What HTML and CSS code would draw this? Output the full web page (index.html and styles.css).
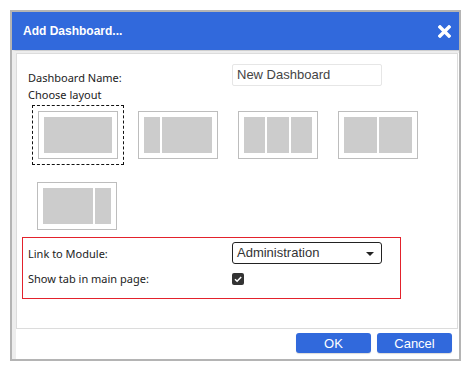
FILE: index.html
```html
<!DOCTYPE html>
<html lang="en">
<head>
  <meta charset="UTF-8" />
  <title>Add Dashboard</title>
  <link rel="stylesheet" href="styles.css">
</head>
<body>

<div class="dialog">
  <div class="dlg-head">
    <span class="dlg-title">Add Dashboard...</span>
    <svg class="dlg-close" width="13" height="13" viewBox="0 0 13 13">
      <path d="M2 2 L11 11 M11 2 L2 11" stroke="#fff" stroke-width="3.4" stroke-linecap="square" />
    </svg>
  </div>

  <div class="dlg-body">
    <div class="panel">
      <div class="row first">
        <label class="lbl name-lbl">Dashboard Name:</label>
        <div class="text-input">New Dashboard</div>
      </div>
      <div class="row lbl">Choose layout</div>

      <div class="layouts">
        <div class="layout selected">
          <div class="thumb t1"><span></span></div>
        </div>
        <div class="layout">
          <div class="thumb t2"><span></span><span></span></div>
        </div>
        <div class="layout">
          <div class="thumb t3"><span></span><span></span><span></span></div>
        </div>
        <div class="layout">
          <div class="thumb t4"><span></span><span></span></div>
        </div>
        <div class="layout">
          <div class="thumb t5"><span></span><span></span></div>
        </div>
      </div>

      <div class="module-box">
        <div class="mrow">
          <label class="lbl">Link to Module:</label>
          <div class="select">Administration<i class="caret"></i></div>
        </div>
        <div class="mrow check-row">
          <label class="lbl">Show tab in main page:</label>
          <span class="check">
            <svg width="12" height="12" viewBox="0 0 12 12">
              <path d="M3 6.2 L5.1 8.2 L9.2 3.9" fill="none" stroke="#fff" stroke-width="1.5" />
            </svg>
          </span>
        </div>
      </div>
    </div>

    <div class="dlg-foot">
      <button class="btn">OK</button>
      <button class="btn">Cancel</button>
    </div>
  </div>
</div>

</body>
</html>
```

FILE: styles.css
```css
* { margin: 0; padding: 0; box-sizing: border-box; }
body { background: #fff; padding: 10px; font-family: "Noto Sans", "Segoe UI", sans-serif; font-size: 11px; color: #222; }

.dialog { width: 451px; height: 351px; border: 2px solid #b4b4b4; background: #fff; display: flex; flex-direction: column; }
.dlg-head { height: 38px; background: #3169dc; display: flex; align-items: center; justify-content: space-between; padding: 0 8px 0 11px; }
.dlg-title { color: #fff; font-family: "Liberation Sans", Arial, sans-serif; font-weight: bold; font-size: 12px; }
.dlg-close { display: block; }

.dlg-body { flex: 1; display: flex; flex-direction: column; border-top: 1px solid #cfcfcf; padding: 2px 1px 0 0; border-left: 4px solid #ededed; background: linear-gradient(#ededed, #ededed) top / 100% 2px no-repeat, #fff; }
.panel { height: 276px; border: 1px solid #dcdcdc; background: #fff; padding: 10px 0 0 5px; }

.row { display: flex; align-items: flex-start; padding-left: 6px; }
.lbl { line-height: 17px; }
.name-lbl { width: 204px; padding-top: 5px; }
.text-input { width: 150px; height: 22px; border: 1px solid #e6e6e6; border-radius: 2px; padding-left: 4px; font-family: "Liberation Sans", Arial, sans-serif; font-size: 13px; color: #444; line-height: 20px; }

.layouts { display: flex; flex-wrap: wrap; gap: 11px 8px; width: 420px; margin: 2px 0 0 10px; }
.layout { width: 92px; height: 60px; padding: 5px; border: 1px dashed transparent; }
.layout.selected { border-color: #111; }
.layout:nth-child(5) { margin-left: -1px; }
.thumb { width: 80px; height: 48px; border: 1px solid #bdbdbd; padding: 5px; display: grid; gap: 2px; }
.thumb span { background: #cccccc; }
.t1 { grid-template-columns: 1fr; }
.t2 { grid-template-columns: 16px 1fr; }
.t3 { grid-template-columns: 1fr 1fr 1fr; }
.t4 { grid-template-columns: 1fr 1fr; }
.t5 { grid-template-columns: 1fr 16px; }

.module-box { width: 379px; margin-top: 1px; border: 1px solid #e3222c; padding: 4px 0 11px 5px; }
.mrow { display: flex; align-items: center; }
.mrow .lbl { width: 204px; }
.check-row { margin-top: 6px; }
.select { position: relative; width: 150px; height: 22px; border: 1px solid #222; border-radius: 3px; padding-left: 4px; font-family: "Liberation Sans", Arial, sans-serif; font-size: 13px; color: #333; line-height: 20px; }
.caret { position: absolute; right: 7px; top: 9px; border-top: 4px solid #222; border-left: 4px solid transparent; border-right: 4px solid transparent; }
.check { width: 12px; height: 12px; background: #333; border-radius: 2px; display: block; }
.check svg { display: block; }

.dlg-foot { flex: 1; display: flex; justify-content: flex-end; align-items: flex-start; gap: 6px; padding: 4px 6px 0 0; }
.btn { width: 75px; height: 20px; border: none; border-radius: 3px; background: #3169dc; color: #fff; font-family: "Liberation Sans", Arial, sans-serif; font-size: 13px; box-shadow: 0 1px 1px rgba(0,0,0,0.15); }
```
